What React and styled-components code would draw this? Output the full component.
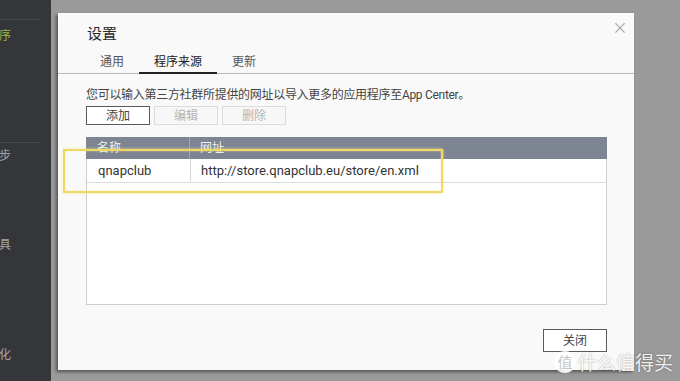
import React from 'react'
import styled, { createGlobalStyle } from 'styled-components'

const GlobalStyle = createGlobalStyle`
    html, body {
        margin:0;
        padding:0;
        width:680px;
        height:381px;
        overflow:hidden;
        font-family: Roboto, "Noto Sans CJK SC", sans-serif;
    }
`

const sideItems = [
    { label: '应用程序', active: true, gap: 6 },
    { divider: true, gap: 96 },
    { label: '备份/同步', gap: 3 },
    { label: '实用工具', gap: 69 },
    { label: '家庭自动化', gap: 90 },
]

const tabs = ['通用', '程序来源', '更新']

const rows = [
    { name: 'qnapclub', url: 'http://store.qnapclub.eu/store/en.xml' },
]

const App = () => {
    return (
        <>
            <GlobalStyle />
            <Screen>
                <Sidebar>
                    <SideDivider $gap={0} />
                    {sideItems.map((item, i) =>
                        item.divider
                            ? <SideDivider key={i} $gap={item.gap} />
                            : <SideItem key={i} $gap={item.gap} $active={item.active}>
                                <span>{item.label}</span>
                            </SideItem>
                    )}
                </Sidebar>
                <Main>
                    <Dialog>
                        <CloseX>×</CloseX>
                        <Title>设置</Title>
                        <Tabs>
                            {tabs.map((t, i) => (
                                <Tab key={t} $active={i === 1}>{t}</Tab>
                            ))}
                        </Tabs>
                        <Body>
                            <Hint>您可以输入第三方社群所提供的网址以导入更多的应用程序至App Center。</Hint>
                            <Toolbar>
                                <Button>添加</Button>
                                <Button disabled>编辑</Button>
                                <Button disabled>删除</Button>
                            </Toolbar>
                            <Table>
                                <HeadRow>
                                    <NameCell>名称</NameCell>
                                    <UrlCell>网址</UrlCell>
                                </HeadRow>
                                {rows.map(r => (
                                    <Row key={r.name}>
                                        <NameCell>{r.name}</NameCell>
                                        <UrlCell>{r.url}</UrlCell>
                                    </Row>
                                ))}
                            </Table>
                            <Footer>
                                <Button $tall>关闭</Button>
                            </Footer>
                        </Body>
                    </Dialog>
                </Main>
                <Highlight />
                <Watermark>
                    <WmBadge>值</WmBadge>
                    <span>什么值得买</span>
                </Watermark>
            </Screen>
        </>
    )
}

const Screen = styled.div`
    position: relative;
    display:flex;
    width:680px;
    height:381px;
    background-color:#9a9a9a;
    overflow:hidden;
`

const Sidebar = styled.div`
    width:51px;
    flex-shrink:0;
    background-color:#35363a;
    display:flex;
    flex-direction:column;
    padding-top:19px;
    box-sizing:border-box;
`

const SideDivider = styled.div`
    width:40px;
    height:1px;
    background-color:#4a4b50;
    margin-top:${p => p.$gap}px;
`

const SideItem = styled.div`
    display:flex;
    justify-content:flex-end;
    width:51px;
    padding-right:40px;
    box-sizing:border-box;
    overflow:hidden;
    margin-top:${p => p.$gap}px;
    height:20px;
    line-height:20px;
    font-size:12px;
    white-space:nowrap;
    color:${p => p.$active ? '#9bb43c' : '#a4a5a8'};
    span{
        flex-shrink:0;
    }
`

const Main = styled.div`
    flex:1;
    padding:13px 46px 11px 7px;
    display:flex;
`

const Dialog = styled.div`
    position: relative;
    flex:1;
    display:flex;
    flex-direction:column;
    background-color:#f9f9f9;
    box-shadow:-2px 2px 3px rgba(0,0,0,.45);
`

const CloseX = styled.div`
    position:absolute;
    top:4px;
    right:6px;
    font-size:19px;
    line-height:20px;
    font-weight:300;
    color:#a0a0a0;
    font-family:"DejaVu Sans", sans-serif;
`

const Title = styled.div`
    margin:11px 0 0 29px;
    font-size:15px;
    line-height:20px;
    color:#2a2a2a;
`

const Tabs = styled.div`
    display:flex;
    margin-top:9px;
    padding-left:27px;
    border-bottom:1px solid #b9b9b9;
`

const Tab = styled.div`
    padding:0 15px;
    font-size:12px;
    line-height:19px;
    height:19px;
    color:${p => p.$active ? '#222' : '#555'};
    border-bottom:2px solid ${p => p.$active ? '#222' : 'transparent'};
    margin-bottom:-1px;
`

const Body = styled.div`
    flex:1;
    display:flex;
    flex-direction:column;
    padding:0 27px 0 28px;
`

const Hint = styled.div`
    margin-top:12px;
    font-size:12px;
    line-height:18px;
    letter-spacing:-0.3px;
    color:#444;
    white-space:nowrap;
`

const Toolbar = styled.div`
    display:flex;
    gap:4px;
    margin-top:2px;
`

const Button = styled.button`
    width:64px;
    height:${p => p.$tall ? 23 : 19}px;
    padding:0;
    font-family:inherit;
    font-size:12px;
    line-height:1;
    background-color:${p => p.disabled ? '#f7f7f7' : '#fff'};
    color:${p => p.disabled ? '#b5b5b5' : '#444'};
    border:1px solid ${p => p.disabled ? '#dcdcdc' : '#5a5a5a'};
    border-radius:0;
`

const Table = styled.div`
    margin-top:12px;
    height:168px;
    background-color:#fff;
    border:1px solid #cdcdcd;
    border-top:none;
    box-sizing:border-box;
`

const HeadRow = styled.div`
    display:flex;
    height:22px;
    background-color:#7d8492;
    color:#eef0f3;
    font-size:12px;
    line-height:22px;
    margin:0 -1px;
    & > div{
        border-right-color:#a3a9b3;
    }
`

const Row = styled.div`
    display:flex;
    height:23px;
    line-height:23px;
    font-size:13px;
    color:#333;
    border-bottom:1px solid #dadada;
`

const NameCell = styled.div`
    width:104px;
    padding-left:11px;
    box-sizing:border-box;
    border-right:1px solid #d6d6d6;
`

const UrlCell = styled.div`
    flex:1;
    padding-left:10px;
`

const Footer = styled.div`
    display:flex;
    justify-content:flex-end;
    margin-top:24px;
`

const Highlight = styled.div`
    position:absolute;
    left:63px;
    top:149px;
    width:380px;
    height:44px;
    box-sizing:border-box;
    border:2px solid #eed866;
    box-shadow:0 0 3px rgba(250,235,140,.8), inset 0 0 2px rgba(250,235,140,.7);
`

const Watermark = styled.div`
    position:absolute;
    left:554px;
    top:350px;
    display:flex;
    align-items:center;
    gap:2px;
    font-family:"Noto Sans CJK SC", sans-serif;
    font-size:19px;
    line-height:24px;
    color:rgba(255,255,255,.9);
    text-shadow:0 0 2px rgba(0,0,0,.35);
`

const WmBadge = styled.span`
    width:22px;
    height:22px;
    border-radius:50%;
    background-color:rgba(255,255,255,.9);
    color:#c8c8c8;
    font-size:15px;
    line-height:22px;
    text-align:center;
    text-shadow:none;
`

export default App
